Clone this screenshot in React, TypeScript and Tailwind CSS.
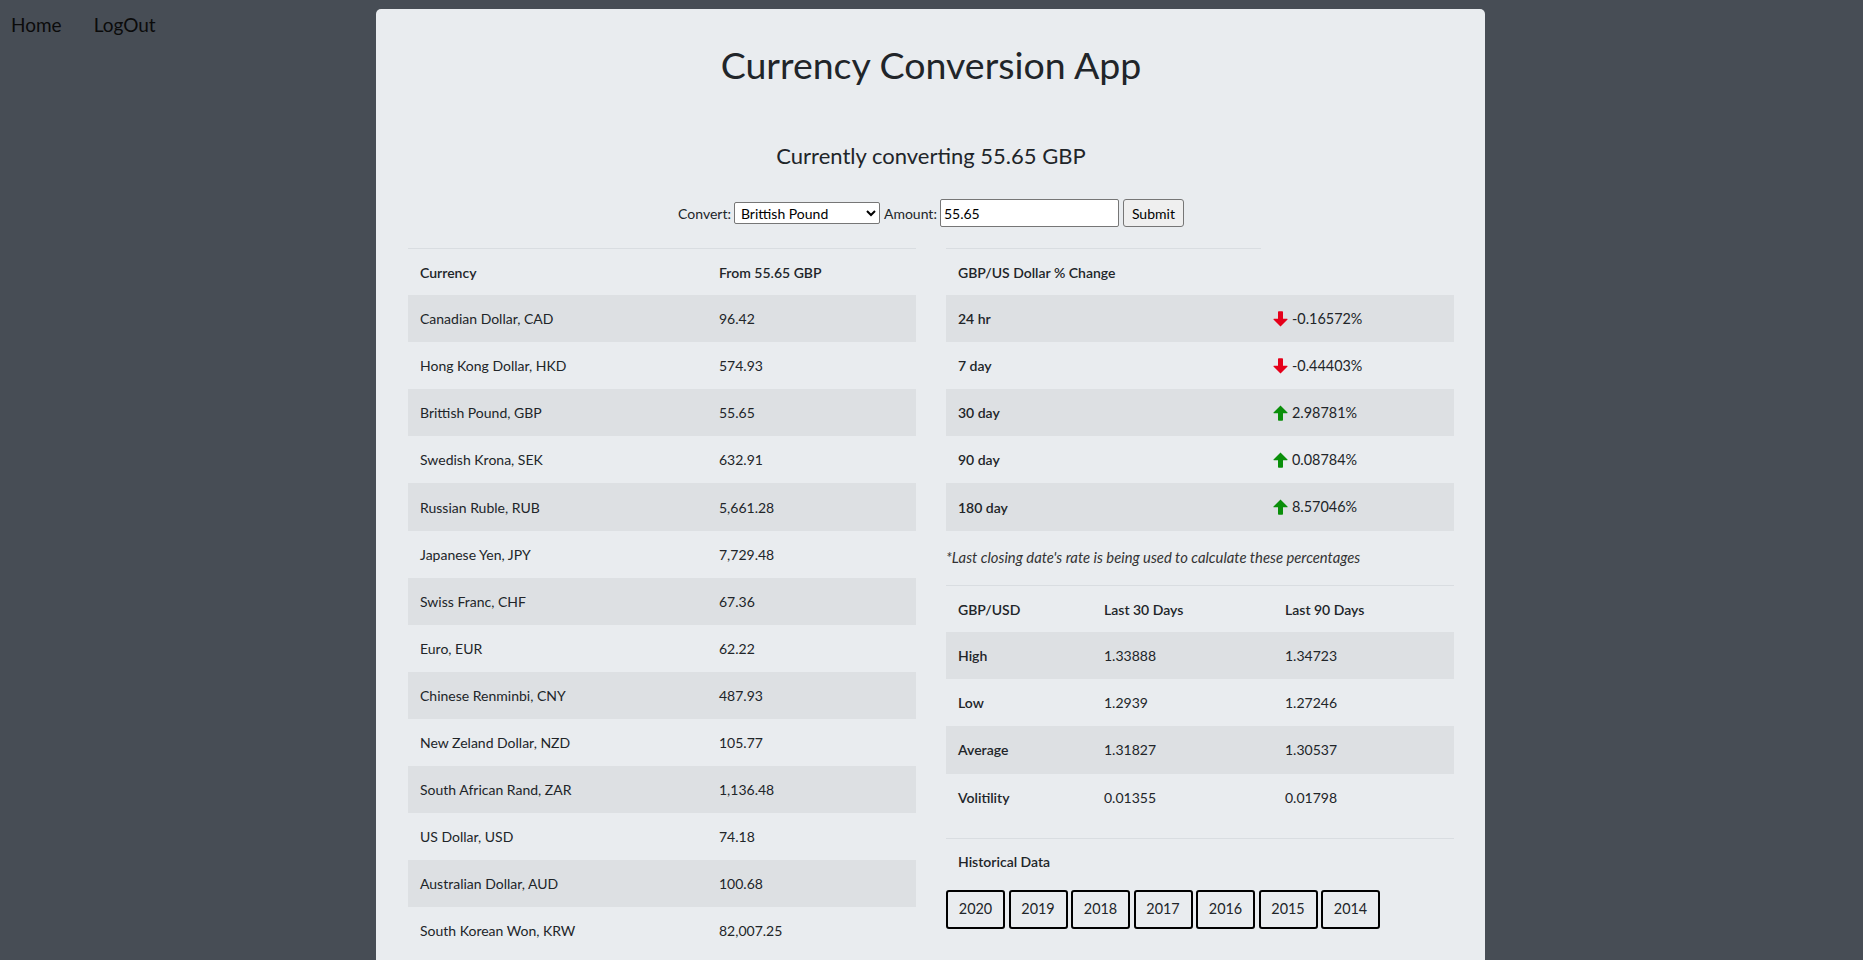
import React from "react";

const currencies: [string, string][] = [
  ["Canadian Dollar, CAD", "96.42"],
  ["Hong Kong Dollar, HKD", "574.93"],
  ["Brittish Pound, GBP", "55.65"],
  ["Swedish Krona, SEK", "632.91"],
  ["Russian Ruble, RUB", "5,661.28"],
  ["Japanese Yen, JPY", "7,729.48"],
  ["Swiss Franc, CHF", "67.36"],
  ["Euro, EUR", "62.22"],
  ["Chinese Renminbi, CNY", "487.93"],
  ["New Zeland Dollar, NZD", "105.77"],
  ["South African Rand, ZAR", "1,136.48"],
  ["US Dollar, USD", "74.18"],
  ["Australian Dollar, AUD", "100.68"],
  ["South Korean Won, KRW", "82,007.25"],
];

const changes: [string, boolean, string][] = [
  ["24 hr", false, "-0.16572%"],
  ["7 day", false, "-0.44403%"],
  ["30 day", true, "2.98781%"],
  ["90 day", true, "0.08784%"],
  ["180 day", true, "8.57046%"],
];

const stats: [string, string, string][] = [
  ["High", "1.33888", "1.34723"],
  ["Low", "1.2939", "1.27246"],
  ["Average", "1.31827", "1.30537"],
  ["Volitility", "0.01355", "0.01798"],
];

const years = ["2020", "2019", "2018", "2017", "2016", "2015", "2014"];

function Arrow({ up }: { up: boolean }) {
  return (
    <svg width="15" height="16" viewBox="0 0 15 16" className="shrink-0">
      {up ? (
        <g fill="#0a8f0a">
          <path d="M7.5 0.5 L14.5 7.6 Q15 8.3 14 8.3 L10 8.3 L10 15 Q10 15.8 9.2 15.8 L5.8 15.8 Q5 15.8 5 15 L5 8.3 L1 8.3 Q0 8.3 0.5 7.6 Z" />
        </g>
      ) : (
        <g fill="#e5001a">
          <path d="M7.5 15.5 L14.5 8.4 Q15 7.7 14 7.7 L10 7.7 L10 1 Q10 0.2 9.2 0.2 L5.8 0.2 Q5 0.2 5 1 L5 7.7 L1 7.7 Q0 7.7 0.5 8.4 Z" />
        </g>
      )}
    </svg>
  );
}

export default function App() {
  return (
    <div
      className="min-h-screen bg-[#474d55] grid grid-cols-[376px_1109px_1fr] text-[#212529]"
      style={{ fontFamily: "Lato, 'Noto Sans', sans-serif" }}
    >
      <nav className="flex items-start gap-[32px] pl-[11px] pt-[13px] text-[19px] leading-[24px] text-[#0b0b0b]">
        <a className="cursor-pointer">Home</a>
        <a className="cursor-pointer">LogOut</a>
      </nav>

      <main className="mt-[9px] rounded-[5px] bg-[#e9ecef] pl-[32px] pr-[31px] pt-[32px] pb-[40px]">
        <h1 className="text-center text-[37.5px] leading-[48px] font-normal">Currency Conversion App</h1>
        <h4 className="mt-[52px] text-center text-[22px] leading-[29px] font-normal">
          Currently converting 55.65 GBP
        </h4>

        <form className="mt-[29px] flex h-[28px] items-center justify-center gap-[3px] text-[14px]">
          <label>Convert:</label>
          <select
            defaultValue="GBP"
            className="h-[22px] w-[146px] rounded-[2px] border border-[#767676] bg-white pl-[2px] text-[14px] text-black"
          >
            <option value="GBP">Brittish Pound</option>
            <option value="USD">US Dollar</option>
          </select>
          <label className="ml-[1px]">Amount:</label>
          <input
            defaultValue="55.65"
            className="h-[28px] w-[179px] rounded-[2px] border border-[#767676] bg-white px-[3px] text-[14px] text-black"
          />
          <button
            type="button"
            className="ml-[1px] h-[28px] w-[61px] rounded-[3px] border border-[#767676] bg-[#efefef] text-[14px] text-black"
          >
            Submit
          </button>
        </form>

        <div className="mt-[21px] flex gap-[30px] text-[14px]">
          {/* Left table */}
          <div className="w-[508px]">
            <div className="grid h-[47.1px] grid-cols-[299px_1fr] items-center border-t border-[#d9dde1] font-semibold">
              <div className="px-[12px]">Currency</div>
              <div className="px-[12px]">From 55.65 GBP</div>
            </div>
            {currencies.map(([name, val], i) => (
              <div
                key={name}
                className={`grid h-[47.1px] grid-cols-[299px_1fr] items-center ${i % 2 === 0 ? "bg-[#dde0e3]" : ""}`}
              >
                <div className="px-[12px]">{name}</div>
                <div className="px-[12px]">{val}</div>
              </div>
            ))}
          </div>

          {/* Right column */}
          <div className="w-[508px]">
            <div className="flex h-[47.1px] w-[315px] items-center border-t border-[#d9dde1] px-[12px] font-semibold">
              GBP/US Dollar % Change
            </div>
            {changes.map(([label, up, val], i) => (
              <div
                key={label}
                className={`grid h-[47.1px] grid-cols-[315px_1fr] items-center ${i % 2 === 0 ? "bg-[#dde0e3]" : ""}`}
              >
                <div className="px-[12px] font-semibold">{label}</div>
                <div className="flex items-center gap-[4px] px-[12px] text-[14.4px]">
                  <Arrow up={up} />
                  <span>{val}</span>
                </div>
              </div>
            ))}

            <p className="mt-[16px] mb-[17px] text-[14.8px] leading-[21.6px] italic text-[#333]">
              *Last closing date's rate is being used to calculate these percentages
            </p>

            <div className="grid h-[47.1px] grid-cols-[146px_181px_1fr] items-center border-t border-[#d9dde1] font-semibold">
              <div className="px-[12px]">GBP/USD</div>
              <div className="px-[12px]">Last 30 Days</div>
              <div className="px-[12px]">Last 90 Days</div>
            </div>
            {stats.map(([label, a, b], i) => (
              <div
                key={label}
                className={`grid h-[47.1px] grid-cols-[146px_181px_1fr] items-center ${i % 2 === 0 ? "bg-[#dde0e3]" : ""}`}
              >
                <div className="px-[12px] font-semibold">{label}</div>
                <div className="px-[12px]">{a}</div>
                <div className="px-[12px]">{b}</div>
              </div>
            ))}

            <div className="mt-[17px] flex h-[47.1px] items-center border-t border-[#d9dde1] px-[12px] font-semibold">
              Historical Data
            </div>
            <div className="mt-[5px] flex gap-[3.5px]">
              {years.map((y) => (
                <button
                  key={y}
                  type="button"
                  className="h-[39px] w-[59px] rounded-[3px] border-2 border-black bg-transparent text-[14.4px]"
                >
                  {y}
                </button>
              ))}
            </div>
          </div>
        </div>
      </main>
      <div />
    </div>
  );
}
